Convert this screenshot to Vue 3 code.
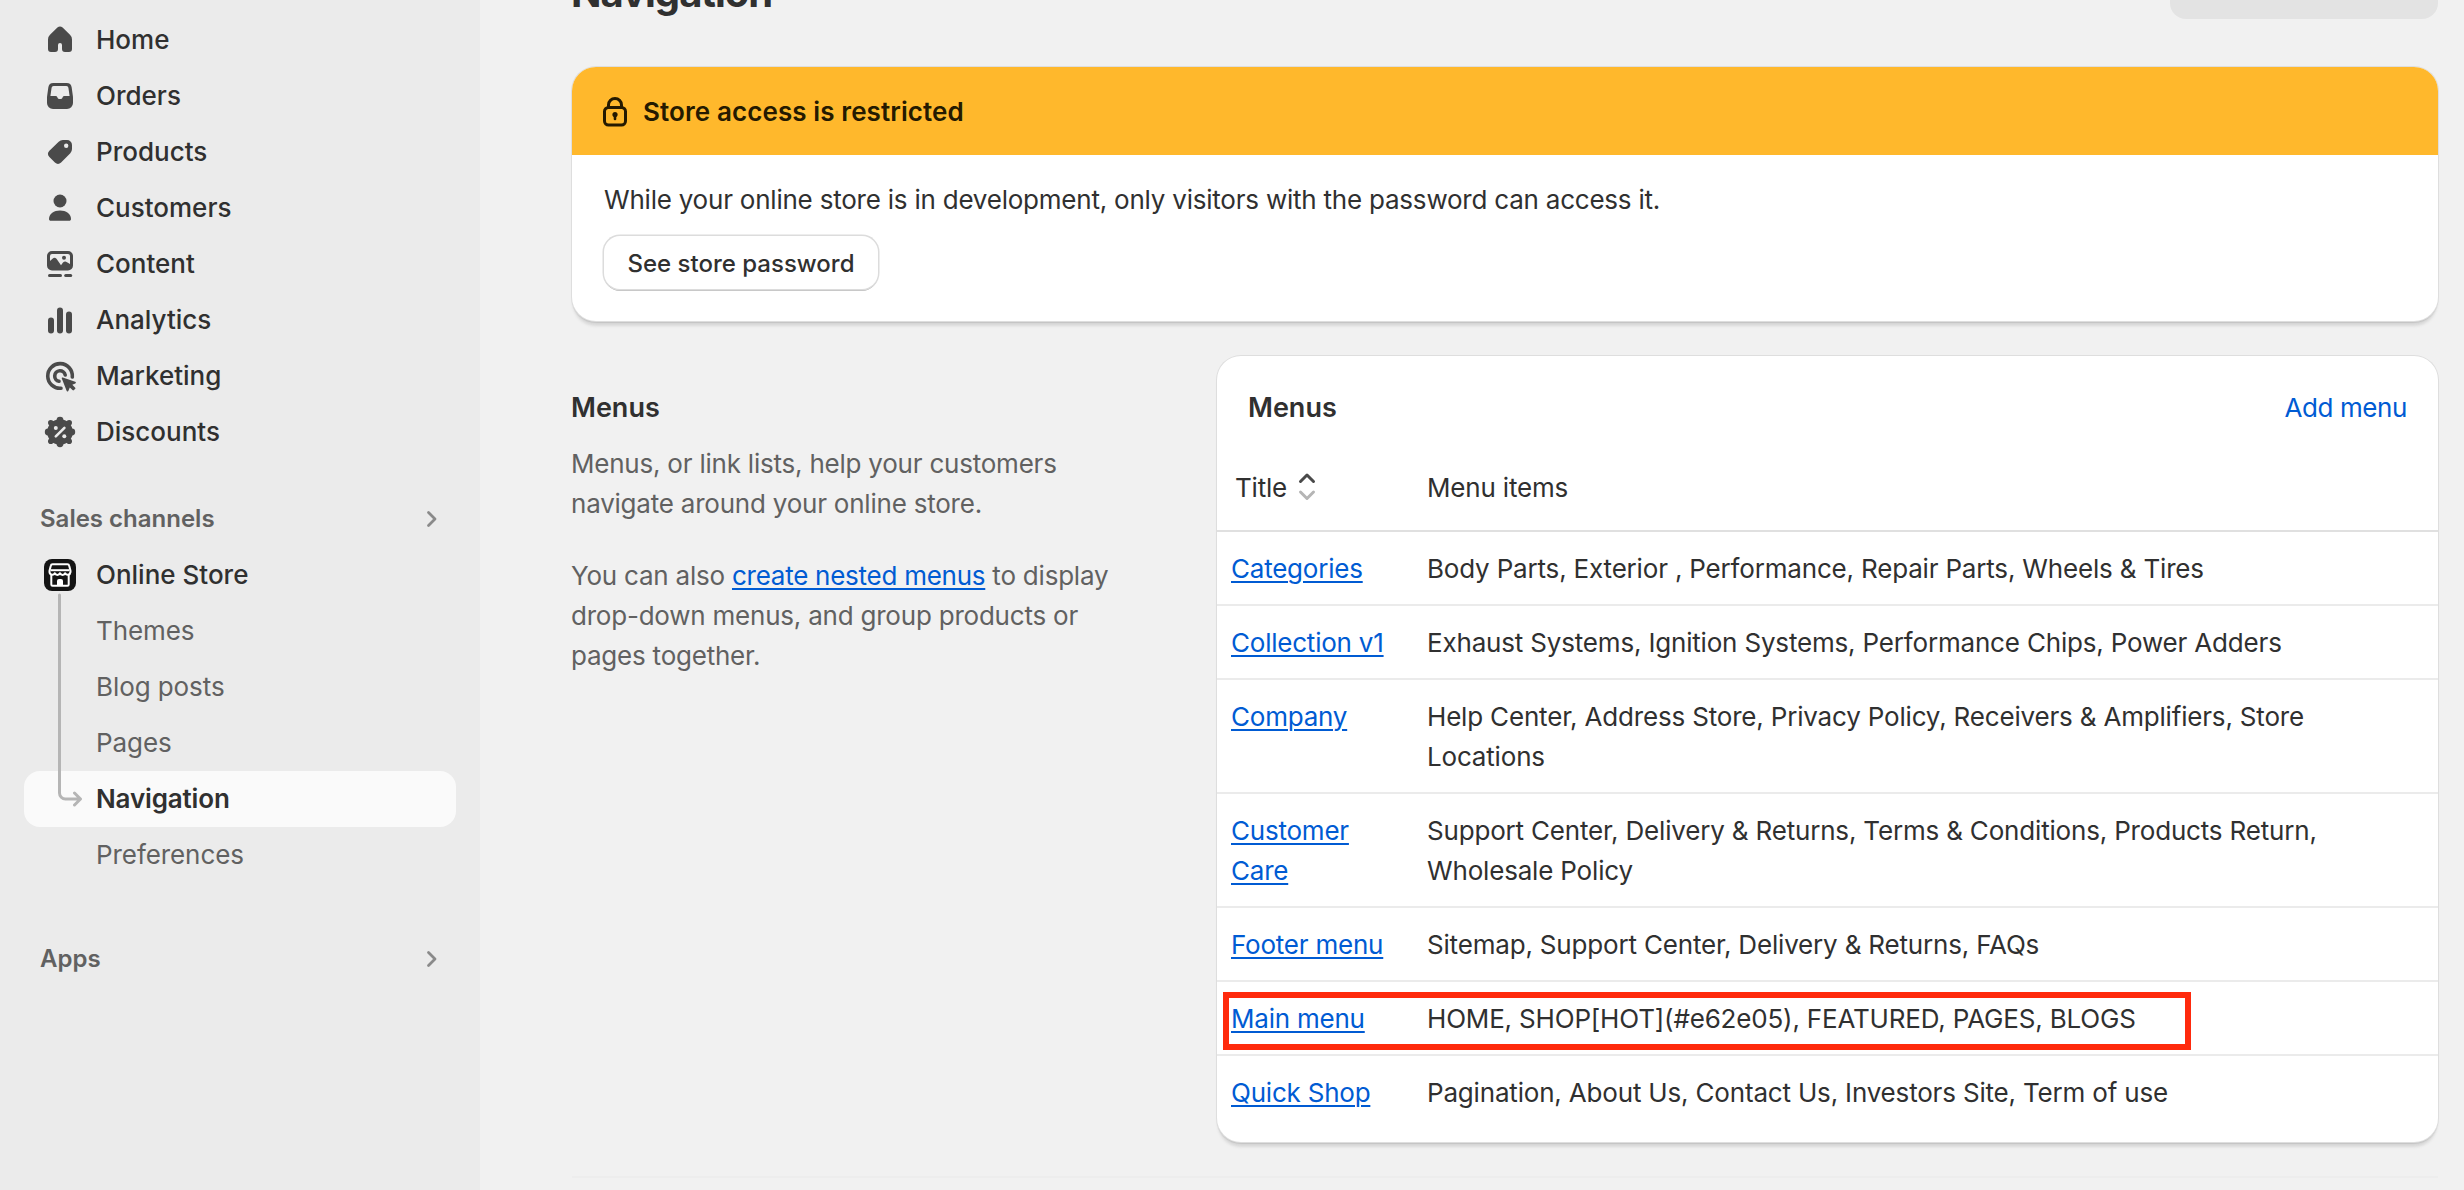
<script setup>
const nav = ['Home', 'Orders', 'Products', 'Customers', 'Content', 'Analytics', 'Marketing', 'Discounts']
const sub = ['Themes', 'Blog posts', 'Pages', 'Navigation', 'Preferences']
const menus = [
  ['Categories', 'Body Parts, Exterior , Performance, Repair Parts, Wheels & Tires'],
  ['Collection v1', 'Exhaust Systems, Ignition Systems, Performance Chips, Power Adders'],
  ['Company', 'Help Center, Address Store, Privacy Policy, Receivers & Amplifiers, Store Locations'],
  ['Customer Care', 'Support Center, Delivery & Returns, Terms & Conditions, Products Return, Wholesale Policy'],
  ['Footer menu', 'Sitemap, Support Center, Delivery & Returns, FAQs'],
  ['Main menu', 'HOME, SHOP[HOT](#e62e05), FEATURED, PAGES, BLOGS'],
  ['Quick Shop', 'Pagination, About Us, Contact Us, Investors Site, Term of use'],
]
// Eight-lobed badge outline for the Discounts icon
const lobes = Array.from({ length: 8 }, (_, i) => {
  const a = (i * Math.PI) / 4
  const r = i % 2 ? 13 : 11.8
  return { x: 20 + r * Math.sin(a), y: 20 - r * Math.cos(a) }
})
</script>

<template>
  <div class="page">
    <aside class="sidebar">
      <nav class="list">
        <a v-for="n in nav" :key="n" class="item">
          <svg class="icon" viewBox="0 0 40 40" fill="#4a4a4a">
            <path v-if="n === 'Home'" d="M17.4 7.600a3.800 3.800 0 0 1 5.200 0l7.400 7.200a6.500 6.500 0 0 1 2 4.600V29a3 3 0 0 1-3 3h-4a3 3 0 0 1-3-3v-4a2 2 0 0 0-4 0v4a3 3 0 0 1-3 3h-4a3 3 0 0 1-3-3v-9.600a6.500 6.500 0 0 1 2-4.600z" />
            <path v-else-if="n === 'Orders'" fill-rule="evenodd" d="M13.300 7h13.400a5 5 0 0 1 4.950 4.300l1.250 9a10 10 0 0 1 .1 1.400V27a6 6 0 0 1-6 6H13a6 6 0 0 1-6-6v-5.300a10 10 0 0 1 .1-1.400l1.250-9A5 5 0 0 1 13.300 7zm.3 3a2 2 0 0 0-2 1.700L10.400 20h5.100a2 2 0 0 1 1.900 1.300l.1.400a2 2 0 0 0 1.900 1.300h1.200a2 2 0 0 0 1.900-1.300l.1-.4A2 2 0 0 1 24.500 20h5.100l-1.200-8.300a2 2 0 0 0-2-1.700z" />
            <path v-else-if="n === 'Products'" fill-rule="evenodd" d="M23 8h4a5 5 0 0 1 5 5v4a6 6 0 0 1-1.700 4.200l-9.200 9.300a4.500 4.500 0 0 1-6.200 0l-5.500-5.500a4.500 4.500 0 0 1 0-6.200l9.300-9.100A6 6 0 0 1 23 8zm3.200 8a2.200 2.200 0 1 0 0-4.400 2.200 2.200 0 0 0 0 4.400z" />
            <template v-else-if="n === 'Customers'">
              <circle cx="20" cy="13" r="6.500" />
              <path d="M9 31c0-5 5-8.400 11-8.400S31 26 31 31c0 1-.8 1.800-1.800 1.800H10.800C9.800 32.800 9 32 9 31z" />
            </template>
            <template v-else-if="n === 'Content'">
              <path fill-rule="evenodd" d="M12 7h16a5 5 0 0 1 5 5v9.500a5 5 0 0 1-5 5H12a5 5 0 0 1-5-5V12a5 5 0 0 1 5-5zm0 3a2 2 0 0 0-2 2v5l2.500-2.300a3 3 0 0 1 4 0l4.500 6.500 2-2.600a3 3 0 0 1 4-.4L30 20v-8a2 2 0 0 0-2-2zm12 5.800a2 2 0 1 0 0-4 2 2 0 0 0 0 4z" />
              <rect x="8" y="30" width="14" height="3" rx="1.500" /><rect x="24.200" y="30" width="8" height="3" rx="1.500" />
            </template>
            <template v-else-if="n === 'Analytics'">
              <rect x="8" y="17.500" width="6" height="16" rx="3" /><rect x="17" y="7.500" width="6" height="26" rx="3" /><rect x="26" y="11.500" width="6" height="22" rx="3" />
            </template>
            <g v-else-if="n === 'Marketing'">
              <path fill="none" stroke="#4a4a4a" stroke-width="3.600" stroke-linecap="round" d="M21 32.200A12.300 12.300 0 1 1 32.300 21M19 25.300A5.300 5.300 0 1 1 25.200 19" />
              <path d="M22.800 21.500l12.400 4.200c.9.300.9 1.300.1 1.700l-3 1.400 2.700 2.800c.6.600.6 1 0 1.500l-1 1c-.6.500-1 .5-1.500 0l-2.700-2.700-1.500 3.500c-.4.800-1.400.8-1.700-.1l-4.800-12.300c-.3-.7.300-1.300 1-1z" />
            </g>
            <template v-else>
              <circle cx="20" cy="20" r="12.800" />
              <circle v-for="(l, i) in lobes" :key="i" :cx="l.x" :cy="l.y" :r="i % 2 ? 2.8 : 3.4" />
              <g fill="#ebebeb"><circle cx="15.800" cy="16" r="2" /><circle cx="24.300" cy="24.300" r="2" /></g>
              <path d="M15.800 24.300l8.600-8.500" stroke="#ebebeb" stroke-width="2.600" stroke-linecap="round" />
            </template>
          </svg>
          <span>{{ n }}</span>
        </a>
      </nav>
      <div class="section">
        <span>Sales channels</span>
        <svg width="16" height="24" viewBox="0 0 16 24"><path d="M4.500 5.500l6.500 6.500-6.500 6.500" /></svg>
      </div>
      <nav class="list store">
        <a class="item">
          <svg class="icon" viewBox="0 0 40 40">
            <rect x="4" y="4" width="32" height="32" rx="8" fill="#141414" />
            <g fill="none" stroke="#fff" stroke-width="2" stroke-linejoin="round">
              <path d="M12.500 9.300h15q1.400 0 1.700 1.500l1.300 5v1.400a2.800 2.800 0 0 1-5.300 1 2.800 2.800 0 0 1-5.200 0 2.800 2.800 0 0 1-5.200 0 2.800 2.800 0 0 1-5.300-1v-1.400l1.300-5q.3-1.500 1.700-1.500z" />
              <path d="M10.500 15.200h19" />
              <path d="M11.300 20v9.500a1.200 1.200 0 0 0 1.200 1.200h15a1.200 1.200 0 0 0 1.200-1.200V20" />
            </g>
            <path d="M17 31v-5a2 2 0 0 1 2-2h2a2 2 0 0 1 2 2v5z" fill="#fff" />
          </svg>
          <span>Online Store</span>
        </a>
        <a v-for="s in sub" :key="s" class="item sub" :class="{ active: s === 'Navigation' }">{{ s }}</a>
        <svg class="branch" width="28" height="220" viewBox="0 0 28 220"><path d="M3.500 2v198a6 6 0 0 0 6 6H24M18.500 200l6 6-6 6" /></svg>
      </nav>
      <div class="section apps">
        <span>Apps</span>
        <svg width="16" height="24" viewBox="0 0 16 24"><path d="M4.500 5.500l6.500 6.500-6.500 6.500" /></svg>
      </div>
    </aside>

    <main class="main">
      <header class="head">
        <h1>Navigation</h1>
        <button class="redirects">View URL Redirects</button>
      </header>

      <section class="card banner">
        <div class="banner-head">
          <svg width="26" height="32" viewBox="0 0 26 32" fill="none" stroke="#251a00" stroke-width="3">
            <rect x="2.500" y="11.500" width="21" height="17.500" rx="4" />
            <path d="M6.500 11V9a6.500 6.500 0 0 1 13 0v2" />
            <circle cx="13" cy="18.500" r="2.600" fill="#251a00" stroke="none" />
            <path d="M13 19v4" stroke-width="2.600" stroke-linecap="round" />
          </svg>
          <h2>Store access is restricted</h2>
        </div>
        <div class="banner-body">
          <p>While your online store is in development, only visitors with the password can access it.</p>
          <button class="btn">See store password</button>
        </div>
      </section>

      <section class="annotated">
        <div class="intro">
          <h2>Menus</h2>
          <p>Menus, or link lists, help your customers navigate around your online store.</p>
          <p>You can also <a class="link">create nested menus</a> to display drop-down menus, and group products or pages together.</p>
        </div>
        <div class="card menus">
          <div class="menus-head"><h2>Menus</h2><a>Add menu</a></div>
          <div class="row columns">
            <div class="title">
              Title
              <svg width="20" height="32" viewBox="0 0 20 32"><path d="M3.500 10.500L10 4l6.500 6.500" stroke="#4a4a4a" /><path d="M3.500 21L10 27.500 16.500 21" stroke="#b5b5b5" /></svg>
            </div>
            <div class="items">Menu items</div>
          </div>
          <div v-for="m in menus" :key="m[0]" class="row">
            <div class="title"><a class="link">{{ m[0] }}</a></div>
            <div class="items">{{ m[1] }}</div>
            <span v-if="m[0] === 'Main menu'" class="marker"></span>
          </div>
        </div>
      </section>
      <hr class="rule" />
    </main>
  </div>
</template>

<style>
body { margin: 0; overflow: hidden; }
</style>

<style scoped>
* { box-sizing: border-box; }
.page { display: flex; width: 2464px; height: 1190px; overflow: hidden; background: #f1f1f1; font-family: Inter, sans-serif; font-size: 26px; line-height: 40px; color: #303030; }
h1, h2, p { margin: 0; }
button { font-family: inherit; border: 0; }
.sidebar { width: 480px; flex: none; background: #ebebeb; padding: 12px 24px 0; }
.list { display: flex; flex-direction: column; }
.item { display: flex; align-items: center; height: 56px; padding-left: 16px; gap: 16px; font-weight: 500; border-radius: 16px; }
.icon { width: 40px; height: 40px; flex: none; }
.section { display: flex; align-items: center; justify-content: space-between; margin-top: 35px; height: 48px; padding: 0 16px; font-size: 24px; font-weight: 600; color: #616161; }
.section svg { fill: none; stroke: #8a8a8a; stroke-width: 2.800; stroke-linecap: round; stroke-linejoin: round; }
.store { position: relative; margin-top: 4px; }
.sub { padding-left: 72px; font-weight: 400; letter-spacing: -0.08px; color: #616161; }
.sub.active { background: #fafafa; color: #303030; font-weight: 600; letter-spacing: -0.15px; }
.branch { position: absolute; left: 32px; top: 46px; fill: none; stroke: #b5b5b5; stroke-width: 3; stroke-linecap: round; stroke-linejoin: round; }
.apps { margin-top: 52px; }
.main { flex: 1; padding: 0 26px 0 92px; letter-spacing: -0.22px; }
.head { display: flex; align-items: flex-start; justify-content: space-between; height: 67px; }
h1 { margin: -31px 0 0 -1px; font-size: 40px; line-height: 48px; font-weight: 700; letter-spacing: -1px; }
.redirects { margin-top: -37px; height: 56px; width: 268px; padding: 0 0 1px; border-radius: 16px; background: #e3e3e3; font-size: 24px; line-height: 32px; font-weight: 500; letter-spacing: 0; color: #303030; white-space: nowrap; }
.card { background: #fff; border-radius: 24px; box-shadow: 0 0 0 1px #dedede, 0 2px 1px #c4c4c4, 0 6px 3px -1px #d8d8d8; }
.banner { height: 254px; overflow: hidden; }
.banner-head { display: flex; align-items: center; gap: 15px; height: 88px; padding: 1px 0 0 30px; background: #ffb82c; color: #251a00; }
h2 { font-size: 27px; line-height: 40px; font-weight: 600; letter-spacing: 0; }
.banner-head h2 { font-size: 26px; letter-spacing: 0.1px; }
.banner-body { padding: 25px 32px 0; }
.btn { margin: 16px 0 0; width: 274px; height: 53px; display: block; padding: 1px 0 0; border-radius: 16px; background: #fff; box-shadow: 0 0 0 1.500px #dcdcdc, 0 2px 0 #b5b5b5; font-size: 24px; font-weight: 500; letter-spacing: 0; color: #303030; }
.annotated { display: flex; justify-content: space-between; margin-top: 35px; }
.intro { width: 560px; margin-left: -1px; padding-top: 32px; color: #616161; }
.intro h2 { color: #303030; }
.intro p { margin-top: 16px; }
.intro p + p { margin-top: 32px; }
.link { color: #005bd3; text-decoration: underline; text-decoration-thickness: 2px; text-underline-offset: 3px; }
.intro .link { letter-spacing: -0.26px; }
.menus { width: 1221px; height: 786px; }
.menus-head { display: flex; justify-content: space-between; padding: 32px 31px 0; height: 94px; }
.menus-head a { color: #005bd3; letter-spacing: -0.4px; }
.row { position: relative; display: flex; padding: 17px 14px 15px; border-bottom: 2px solid #ebebeb; }
.row:last-child { border-bottom: 0; }
.columns { height: 82px; padding-top: 18px; border-color: #e0e0e0; }
.columns .title { padding-left: 4px; }
.title { width: 196px; flex: none; padding-right: 30px; display: flex; gap: 10px; }
.columns svg { margin-top: 3px; fill: none; stroke-width: 3; stroke-linecap: round; stroke-linejoin: round; }
.items { flex: 1; max-width: 920px; letter-spacing: -0.18px; }
.marker { position: absolute; left: 6px; top: 10px; width: 968px; height: 58px; border: 6px solid #ff2a0d; }
.rule { margin: 34px 0 0; border: 0; border-top: 2px solid #ededed; }
</style>
